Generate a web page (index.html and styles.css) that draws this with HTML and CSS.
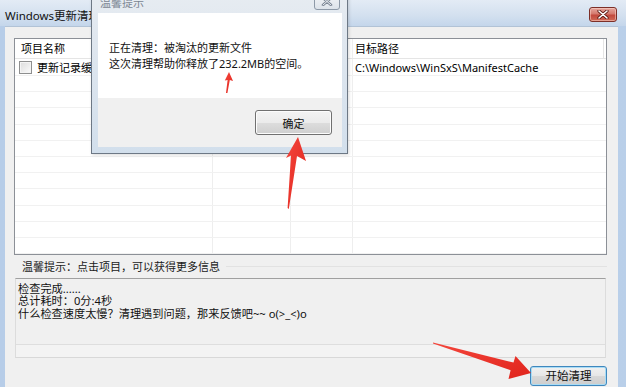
FILE: index.html
```html
<!DOCTYPE html>
<html lang="zh-CN">
<head>
<meta charset="utf-8">
<title>Windows更新清理</title>
<link rel="stylesheet" href="styles.css">
</head>
<body>
<div class="window">
  <div class="titlebar">
    <span class="title">Windows更新清理</span>
    <div class="close-main">
      <svg width="12" height="9" viewBox="0 0 12 9"><path d="M2 1 L10 8 M10 1 L2 8" stroke="#5a1a14" stroke-width="3.2" stroke-linecap="round"/><path d="M2 1 L10 8 M10 1 L2 8" stroke="#ffffff" stroke-width="1.6" stroke-linecap="round"/></svg>
    </div>
  </div>
  <div class="client">
    <div class="list">
      <div class="row header">
        <div class="cell c1">项目名称</div>
        <div class="cell c2"></div>
        <div class="cell c3"></div>
        <div class="cell c4">目标路径</div>
      </div>
      <div class="row first">
        <div class="cell c1"><span class="check"></span>更新记录缓存</div>
        <div class="cell c2"></div>
        <div class="cell c3"></div>
        <div class="cell c4">C:\Windows\WinSxS\ManifestCache</div>
      </div>
      <div class="row"><div class="cell c1"></div><div class="cell c2"></div><div class="cell c3"></div><div class="cell c4"></div></div>
      <div class="row"><div class="cell c1"></div><div class="cell c2"></div><div class="cell c3"></div><div class="cell c4"></div></div>
      <div class="row"><div class="cell c1"></div><div class="cell c2"></div><div class="cell c3"></div><div class="cell c4"></div></div>
      <div class="row"><div class="cell c1"></div><div class="cell c2"></div><div class="cell c3"></div><div class="cell c4"></div></div>
      <div class="row"><div class="cell c1"></div><div class="cell c2"></div><div class="cell c3"></div><div class="cell c4"></div></div>
      <div class="row"><div class="cell c1"></div><div class="cell c2"></div><div class="cell c3"></div><div class="cell c4"></div></div>
      <div class="row"><div class="cell c1"></div><div class="cell c2"></div><div class="cell c3"></div><div class="cell c4"></div></div>
      <div class="row"><div class="cell c1"></div><div class="cell c2"></div><div class="cell c3"></div><div class="cell c4"></div></div>
      <div class="row"><div class="cell c1"></div><div class="cell c2"></div><div class="cell c3"></div><div class="cell c4"></div></div>
      <div class="row"><div class="cell c1"></div><div class="cell c2"></div><div class="cell c3"></div><div class="cell c4"></div></div>
      <div class="row"><div class="cell c1"></div><div class="cell c2"></div><div class="cell c3"></div><div class="cell c4"></div></div>
    </div>
    <div class="hint"><span class="hint-text">温馨提示：点击项目，可以获得更多信息</span><span class="hint-line"></span></div>
    <div class="log">
      <div class="log-text">
        <div class="log-line">检查完成......</div>
        <div class="log-line">总计耗时：0分:4秒</div>
        <div class="log-line">什么检查速度太慢？清理遇到问题，那来反馈吧~~ o(&gt;_&lt;)o</div>
      </div>
      <div class="log-foot"></div>
    </div>
    <div class="actions"><button class="btn-start">开始清理</button></div>
  </div>
</div>

<div class="dialog">
  <div class="dlg-titlebar">
    <span class="dlg-title">温馨提示</span>
    <div class="dlg-close">
      <svg width="12" height="9" viewBox="0 0 12 9"><path d="M2 1 L10 8 M10 1 L2 8" stroke="#7b8694" stroke-width="2.6" stroke-linecap="round"/><path d="M2 1 L10 8 M10 1 L2 8" stroke="#e9edf2" stroke-width="1" stroke-linecap="round"/></svg>
    </div>
  </div>
  <div class="dlg-client">
    <div class="dlg-message">正在清理：被淘汰的更新文件<br>这次清理帮助你释放了232.2MB的空间。</div>
    <div class="dlg-buttons"><button class="btn-ok">确定</button></div>
  </div>
</div>

<svg class="arrows" width="626" height="387" viewBox="0 0 626 387">
  <defs>
    <linearGradient id="red" x1="0" y1="0" x2="1" y2="1">
      <stop offset="0" stop-color="#f4463c"/>
      <stop offset="1" stop-color="#e0241c"/>
    </linearGradient>
  </defs>
  <polygon fill="url(#red)" points="229,72 233,81 229.8,80 227.4,93 226,93 227.6,80 224.8,80.5"/>
  <polygon fill="url(#red)" points="298,137 306,161 297,156 288.8,209 287.6,208 291,155.5 286,158"/>
  <polygon fill="url(#red)" points="433,342.4 513.5,362.6 515.5,356 531,373 508.5,379 510.6,370.2 433,343.6"/>
</svg>
</body>
</html>
```

FILE: styles.css
```css
* { box-sizing: border-box; }

body {
  margin: 0;
  width: 626px;
  height: 387px;
  overflow: hidden;
  position: relative;
  background: #bfd3ea;
  font-family: "Noto Sans", "Noto Sans CJK SC", sans-serif;
  font-size: 11px;
  color: #000;
}

.window {
  width: 626px;
  height: 387px;
  display: flex;
  flex-direction: column;
  background: linear-gradient(90deg, #b7cde8 0%, #c6d8ec 50%, #b9cfe9 100%);
}

.titlebar {
  height: 26px;
  flex: none;
  display: flex;
  align-items: flex-start;
  justify-content: space-between;
  padding: 0 9px 0 5px;
  background: linear-gradient(#e3ebf5 0%, #d3e0ef 60%, #c4d6eb 100%);
}

.title {
  font-size: 11.5px;
  line-height: 14px;
  margin-top: 9px;
  color: #111;
}

.close-main {
  margin-top: 7px;
  width: 28px;
  height: 15px;
  border: 1px solid #7c2f28;
  border-radius: 3px;
  background: linear-gradient(#e5a79e 0%, #d57a6e 45%, #c2493d 55%, #cf6a57 100%);
  display: flex;
  align-items: center;
  justify-content: center;
  box-shadow: inset 0 0 0 1px rgba(255, 220, 210, 0.5);
}

.client {
  flex: 1;
  margin: 0 8px 0 5px;
  background: #f0f0f0;
  border-top: 1px solid #b2c3d6;
  padding: 11px 11px 0 9px;
  display: flex;
  flex-direction: column;
}

.list {
  height: 217px;
  flex: none;
  background: #fff;
  border: 1px solid #8c9097;
  overflow: hidden;
}

.row {
  display: flex;
  height: 16.2px;
  border-bottom: 1px solid #f1f1f1;
}

.row.header {
  height: 20px;
  border-bottom: 1px solid #e5e5e5;
}

.row.first {
  height: 17px;
}

.cell {
  height: 100%;
  border-right: 1px solid #eeeeee;
  line-height: 15px;
  white-space: nowrap;
  overflow: hidden;
  display: flex;
  align-items: center;
}

.c1 { width: 198px; padding-left: 4px; }
.c2 { width: 78px; }
.c3 { width: 62px; }
.c4 { flex: 1; padding-left: 2px; border-right: none; }

.header .c1 { padding-left: 6px; }
.header .c4 { padding-left: 2px; border-right: 1px solid #e5e5e5; flex: none; width: 251px; }

.check {
  width: 13px;
  height: 13px;
  border: 1px solid #8e8f8f;
  background: linear-gradient(135deg, #dcdcdc, #fbfbfb);
  box-shadow: inset 0 0 0 1px #f4f4f4;
  margin-right: 5px;
  flex: none;
}

.hint {
  height: 23px;
  flex: none;
  display: flex;
  align-items: center;
  padding-left: 8px;
  color: #1a1a1a;
}

.hint-text {
  line-height: 14px;
  margin-top: 1px;
}

.hint-line {
  flex: 1;
  height: 1px;
  margin-left: 6px;
  background: #e2e2e2;
}

.log {
  height: 80px;
  flex: none;
  margin: 0 1px;
  border-top: 1px solid #a0a0a0;
  border-left: 1px solid #dcdcdc;
  border-right: 1px solid #dcdcdc;
  border-bottom: 1px solid #d8d8d8;
  display: flex;
  flex-direction: column;
}

.log-text {
  flex: 1;
  padding: 4px 0 0 2px;
  color: #111;
  font-size: 11.2px;
}

.log-line {
  height: 12.3px;
  line-height: 12.3px;
  white-space: nowrap;
}

.log-foot {
  height: 13px;
  border-top: 1px solid #dedede;
  background: #f3f3f3;
}

.actions {
  display: flex;
  justify-content: flex-end;
  padding-top: 8px;
}

.btn-start {
  width: 77px;
  height: 20px;
  padding: 0;
  font: inherit;
  font-size: 11.5px;
  line-height: 16px;
  color: #111;
  border: 1px solid #3f87bd;
  border-radius: 3px;
  background: linear-gradient(#f1f1f1 0%, #e6e6e6 50%, #d8d8d8 51%, #cdcdcd 100%);
  box-shadow: inset 0 0 0 1px #a9dcf5;
}

/* dialog */
.dialog {
  position: absolute;
  left: 91px;
  top: -14px;
  width: 257px;
  height: 168px;
  border: 1px solid #6d7885;
  background: linear-gradient(#e8edf2 0%, #e0e7ef 30%, #d2dfec 100%);
  padding: 0 5px 6px 6px;
  display: flex;
  flex-direction: column;
  box-shadow: 1px 1px 3px rgba(0, 0, 0, 0.15);
}

.dlg-titlebar {
  height: 26px;
  flex: none;
  display: flex;
  justify-content: space-between;
  align-items: flex-start;
  padding: 0 2px;
}

.dlg-title {
  margin-top: 10px;
  line-height: 12px;
  color: #7a8491;
  font-size: 11px;
}

.dlg-close {
  margin-top: 5px;
  width: 26px;
  height: 18px;
  border: 1px solid #8d99a7;
  border-radius: 3px;
  background: linear-gradient(#f4f6f8, #dde3ea);
  display: flex;
  align-items: flex-end;
  justify-content: center;
  padding-bottom: 3px;
}

.dlg-client {
  flex: 1;
  display: flex;
  flex-direction: column;
  background: #f0f0f0;
}

.dlg-message {
  height: 85px;
  flex: none;
  background: #fff;
  padding: 27px 0 0 11px;
  line-height: 16px;
  color: #111;
}

.dlg-buttons {
  flex: 1;
  display: flex;
  justify-content: flex-end;
  padding: 12px 10px 0 0;
}

.btn-ok {
  width: 77px;
  height: 25px;
  padding: 0;
  font: inherit;
  color: #111;
  border: 1px solid #707070;
  border-radius: 3px;
  background: linear-gradient(#f3f3f3 0%, #ebebeb 50%, #dddddd 51%, #cfcfcf 100%);
  box-shadow: inset 0 0 0 1px #fcfcfc;
}

.arrows {
  position: absolute;
  left: 0;
  top: 0;
  pointer-events: none;
}
```
